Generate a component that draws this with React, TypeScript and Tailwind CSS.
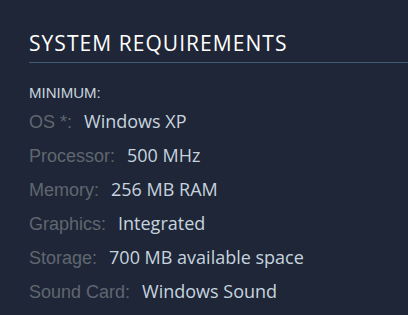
import React from "react";

const rows: [string, string][] = [
  ["OS *:", "Windows XP"],
  ["Processor:", "500 MHz"],
  ["Memory:", "256 MB RAM"],
  ["Graphics:", "Integrated"],
  ["Storage:", "700 MB available space"],
  ["Sound Card:", "Windows Sound"],
];

export default function App() {
  return (
    <div className="w-[408px] h-[315px] overflow-hidden bg-[#1f2637] pl-[29px] pt-[28px]">
      <h2 className="text-[21px] leading-[30px] tracking-[0.05em] text-white uppercase font-['Open_Sans',sans-serif] font-normal">
        System Requirements
      </h2>
      <div className="mt-[4px] h-px bg-[#3f5a78]" />
      <div className="mt-[22px] text-[15px] leading-[16px] text-[#c6d4df] font-['Liberation_Sans',Arial,sans-serif] uppercase">
        Minimum:
      </div>
      <ul className="mt-[3px] flex flex-col">
        {rows.map(([label, value]) => (
          <li key={label} className="flex items-baseline h-[34px] leading-[34px]">
            <span className="text-[18px] text-[#5f6770] font-['Liberation_Sans',Arial,sans-serif]">
              {label}
            </span>
            <span className="ml-[12px] text-[18px] text-[#c6d4df] font-['Open_Sans',sans-serif]">
              {value}
            </span>
          </li>
        ))}
      </ul>
    </div>
  );
}
